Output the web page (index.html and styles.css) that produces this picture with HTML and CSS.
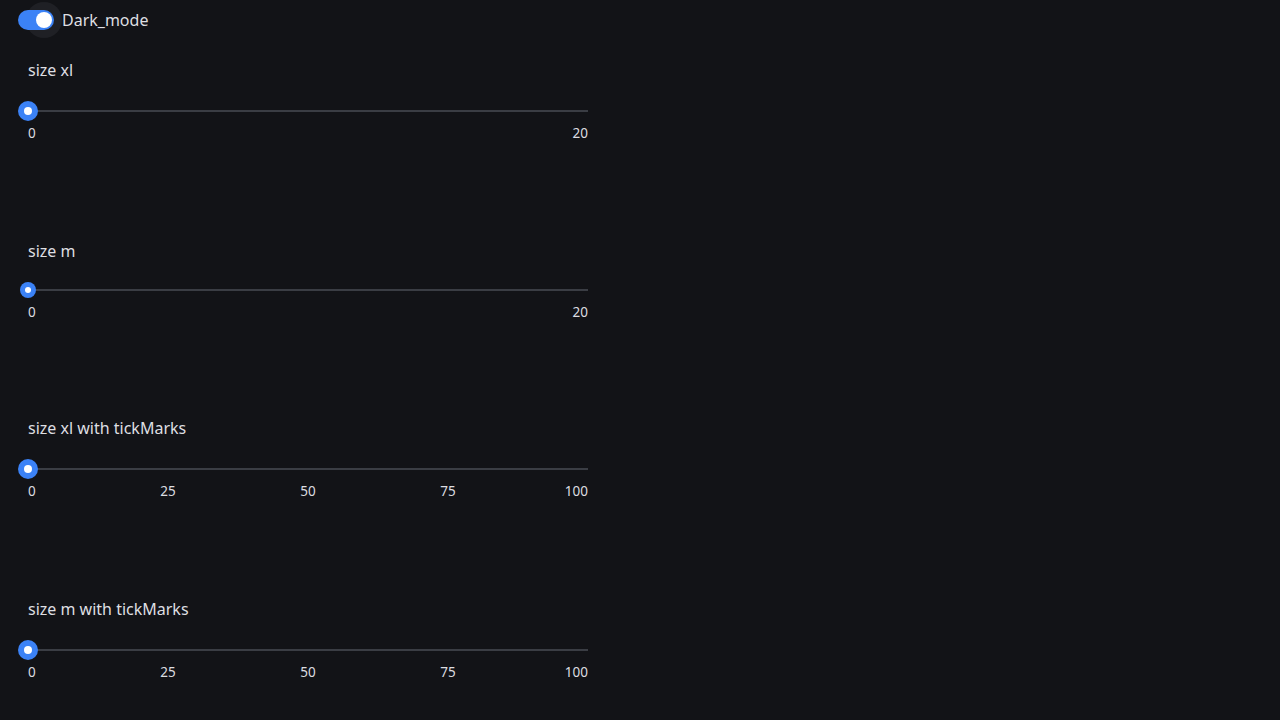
FILE: index.html
```html
<!DOCTYPE html>
<html lang="en">
    <head>
        <meta charset="UTF-8" />
        <meta name="viewport" content="width=device-width, initial-scale=1.0" />
        <title>Slider sizes</title>

        <link rel="stylesheet" href="styles.css">
    </head>
    <body>
        <header class="topbar">
            <label class="switch">
                <span class="switch-track">
                    <span class="switch-halo"></span>
                    <span class="switch-thumb"></span>
                </span>
                <span class="switch-label">Dark_mode</span>
            </label>
        </header>

        <main class="list">
            <section class="block">
                <span class="block-title">size xl</span>
                <div class="slider slider-xl">
                    <div class="slider-track"></div>
                    <div class="slider-thumb"></div>
                </div>
                <div class="marks">
                    <span class="mark first">0</span>
                    <span class="mark last">20</span>
                </div>
            </section>

            <section class="block">
                <span class="block-title">size m</span>
                <div class="slider slider-m">
                    <div class="slider-track"></div>
                    <div class="slider-thumb"></div>
                </div>
                <div class="marks">
                    <span class="mark first">0</span>
                    <span class="mark last">20</span>
                </div>
            </section>

            <section class="block">
                <span class="block-title">size xl with tickMarks</span>
                <div class="slider slider-xl">
                    <div class="slider-track"></div>
                    <div class="slider-thumb"></div>
                </div>
                <div class="marks">
                    <span class="mark first">0</span>
                    <span class="mark" style="left: 25%">25</span>
                    <span class="mark" style="left: 50%">50</span>
                    <span class="mark" style="left: 75%">75</span>
                    <span class="mark last">100</span>
                </div>
            </section>

            <section class="block">
                <span class="block-title">size m with tickMarks</span>
                <div class="slider slider-xl">
                    <div class="slider-track"></div>
                    <div class="slider-thumb"></div>
                </div>
                <div class="marks">
                    <span class="mark first">0</span>
                    <span class="mark" style="left: 25%">25</span>
                    <span class="mark" style="left: 50%">50</span>
                    <span class="mark" style="left: 75%">75</span>
                    <span class="mark last">100</span>
                </div>
            </section>
        </main>
    </body>
</html>
```

FILE: styles.css
```css
body {
    margin: 0px;
    padding: 0px;
    font-family: "Noto Sans", Lato, sans-serif;
    background-color: #121317;
    color: #dedfe2;
}

.topbar {
    padding: 10px 0px 0px 18px;
    height: 20px;
}

.switch {
    display: flex;
    align-items: center;
    gap: 8px;
}

.switch-track {
    position: relative;
    width: 36px;
    height: 20px;
    border-radius: 10px;
    background-color: #3b82f6;
}

.switch-halo {
    position: absolute;
    left: 8px;
    top: -8px;
    width: 36px;
    height: 36px;
    border-radius: 50%;
    background-color: #1f2025;
    z-index: -1;
}

.switch-thumb {
    position: absolute;
    right: 2px;
    top: 2px;
    width: 16px;
    height: 16px;
    border-radius: 50%;
    background-color: #ffffff;
}

.switch-label {
    font-size: 16px;
    line-height: 20px;
}

.list {
    padding: 28px 0px 0px 28px;
    width: 560px;
    display: flex;
    flex-direction: column;
}

.block {
    display: flex;
    flex-direction: column;
    height: 181px;
}

.block:nth-child(2) {
    height: 177px;
}

.block:last-child {
    height: auto;
}

.block-title {
    font-size: 16px;
    line-height: 24px;
}

.slider {
    position: relative;
    height: 20px;
}

.slider-xl {
    margin-top: 19px;
}

.slider-m {
    margin-top: 17px;
}

.slider-track {
    position: absolute;
    left: 0px;
    right: 0px;
    top: 9px;
    height: 2px;
    background-color: #3a3d44;
}

.slider-thumb {
    position: absolute;
    top: 50%;
    left: 0px;
    border-radius: 50%;
    background-color: #3b82f6;
    transform: translate(-50%, -50%);
}

.slider-thumb::after {
    content: "";
    position: absolute;
    left: 50%;
    top: 50%;
    border-radius: 50%;
    background-color: #ffffff;
    transform: translate(-50%, -50%);
}

.slider-xl .slider-thumb {
    width: 20px;
    height: 20px;
}

.slider-xl .slider-thumb::after {
    width: 8px;
    height: 8px;
}

.slider-m .slider-thumb {
    width: 16px;
    height: 16px;
}

.slider-m .slider-thumb::after {
    width: 6px;
    height: 6px;
}

.marks {
    position: relative;
    margin-top: 2px;
    height: 20px;
    font-size: 13.5px;
    line-height: 20px;
    color: #dcdde0;
}

.mark {
    position: absolute;
    top: 0px;
    transform: translateX(-50%);
}

.mark.first {
    left: 0px;
    transform: none;
}

.mark.last {
    right: 0px;
    transform: none;
}
```
